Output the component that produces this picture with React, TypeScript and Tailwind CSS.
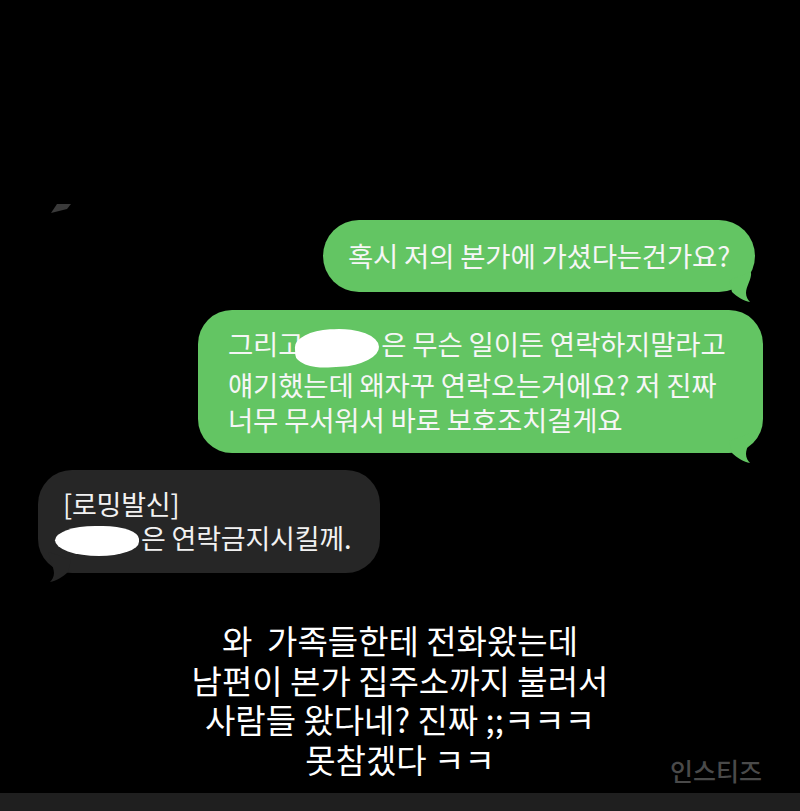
const font = { fontFamily: '"Noto Sans CJK KR", "Noto Sans", sans-serif' };

function TailRight({ className, fill }: { className: string; fill: string }) {
  return (
    <svg className={`absolute ${className}`} width="30" height="30" viewBox="0 0 30 30">
      <path d="M0 8 L22 0 C23 7 17 14 17 21 C17 25 19 28 21 30 C15 29 8 25 3 20 Z" fill={fill} />
    </svg>
  );
}

function TailLeft({ className, fill }: { className: string; fill: string }) {
  return (
    <svg className={`absolute ${className}`} width="30" height="30" viewBox="0 0 30 30">
      <path d="M30 8 L8 0 C7 7 13 14 13 21 C13 25 11 28 9 30 C15 29 22 25 27 20 Z" fill={fill} />
    </svg>
  );
}

function Blob({ className }: { className: string }) {
  return <span className={`relative inline-block bg-white align-middle ${className}`} />;
}

export default function App() {
  return (
    <div className="relative flex h-[811px] w-full flex-col overflow-hidden bg-black text-white" style={font}>
      {/* stray tail from a message above */}
      <div className="h-[220px] pt-[203px] pl-[50px]">
        <svg width="22" height="11" viewBox="0 0 22 11">
          <path d="M7 1 L21 1 L17 6 L1 10 Z" fill="#3a3a3a" />
        </svg>
      </div>

      <div className="flex justify-end pr-[45px]">
        <div className="relative flex h-[72px] items-center rounded-full bg-[#63c563] px-[25px] text-[27.5px] tracking-[-0.2px] text-[#f6f6f6]">
          <span className="relative z-10">혹시 저의 본가에 가셨다는건가요?</span>
          <TailRight className="right-[-4px] bottom-[-10px]" fill="#63c563" />
        </div>
      </div>

      <div className="mt-[18px] flex justify-end pr-[37px]">
        <div className="relative w-[565px] rounded-[34px] bg-[#63c563] px-[30px] py-[16px] text-[27.5px] leading-[35px] tracking-[-0.2px] text-[#f6f6f6]">
          <p className="relative z-10 whitespace-nowrap">
            그리고
            <Blob className="ml-[-8px] mr-[2px] h-[38px] w-[84px] -rotate-3 rounded-[45%_55%_50%_40%]" />은 무슨 일이든 연락하지말라고
          </p>
          <p className="relative z-10 whitespace-nowrap">얘기했는데 왜자꾸 연락오는거에요? 저 진짜</p>
          <p className="relative z-10 whitespace-nowrap">너무 무서워서 바로 보호조치걸게요</p>
          <TailRight className="right-[4px] bottom-[-10px]" fill="#63c563" />
        </div>
      </div>

      <div className="mt-[17px] flex pl-[38px]">
        <div className="relative w-[342px] rounded-[34px] bg-[#262626] px-[25px] py-[17px] text-[27px] leading-[34px] tracking-[-0.2px] text-[#f2f2f2]">
          <p className="relative z-10">[로밍발신]</p>
          <p className="relative z-10 whitespace-nowrap">
            <Blob className="ml-[-8px] mr-[2px] h-[30px] w-[84px] rounded-[50%_45%_50%_55%]" />은 연락금지시킬께.
          </p>
          <TailLeft className="left-[3px] bottom-[-9px]" fill="#262626" />
        </div>
      </div>

      <div className="mt-[48px] text-center text-[33px] leading-[39.5px] text-white">
        <p>와&nbsp;&nbsp;가족들한테 전화왔는데</p>
        <p>남편이 본가 집주소까지 불러서</p>
        <p>사람들 왔다네? 진짜 ;;ㅋㅋㅋ</p>
        <p>못참겠다 ㅋㅋ</p>
      </div>

      <div className="flex-1" />
      <div className="h-[18px] bg-[#1f1f1f]" />

      <span className="absolute right-[38px] top-[752px] text-[25px] font-medium text-[#4a4a4a]">인스티즈</span>
    </div>
  );
}
